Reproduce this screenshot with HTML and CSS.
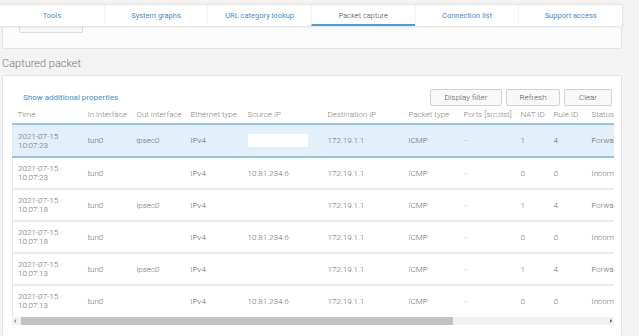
FILE: index.html
```html
<!DOCTYPE html><html lang="en"><head><meta charset="utf-8">
<meta name="viewport" content="width=device-width,initial-scale=1">
<title>Diagnostics · Packet capture</title>
<link rel="stylesheet" href="styles.css">
</head>
<body>
<div class="page">
  <nav class="tabs">
    <a class="tab">Tools</a>
    <a class="tab">System graphs</a>
    <a class="tab">URL category lookup</a>
    <a class="tab active">Packet capture</a>
    <a class="tab">Connection list</a>
    <a class="tab">Support access</a>
  </nav>

  <div class="card top-card"><div class="btn-stub"></div></div>

  <h2 class="section-title">Captured packet</h2>

  <div class="card capture">
    <div class="toolbar">
      <a class="link">Show additional properties</a>
      <div class="actions">
        <button class="btn btn-filter">Display filter</button>
        <button class="btn btn-refresh">Refresh</button>
        <button class="btn btn-clear">Clear</button>
      </div>
    </div>

    <div class="grid-wrap">
      <table class="packets">
        <colgroup>
          <col class="c-time"><col class="c-in"><col class="c-out"><col class="c-eth">
          <col class="c-src"><col class="c-dst"><col class="c-pkt"><col class="c-ports">
          <col class="c-nat"><col class="c-rule"><col class="c-status">
        </colgroup>
        <thead>
          <tr><th>Time</th><th>In interface</th><th>Out interface</th><th>Ethernet type</th><th>Source IP</th><th>Destination IP</th><th>Packet type</th><th>Ports [src,dst]</th><th>NAT ID</th><th>Rule ID</th><th>Status</th></tr>
        </thead>
        <tbody>
          <tr class="selected"><td>2021-07-15<br>10:07:23</td><td>tun0</td><td>ipsec0</td><td>IPv4</td><td><span class="redacted"></span></td><td>172.19.1.1</td><td>ICMP</td><td class="dim">--</td><td>1</td><td>4</td><td>Forwarded</td></tr>
          <tr><td>2021-07-15<br>10:07:23</td><td>tun0</td><td></td><td>IPv4</td><td>10.81.234.6</td><td>172.19.1.1</td><td>ICMP</td><td class="dim">--</td><td>0</td><td>0</td><td>Incoming</td></tr>
          <tr><td>2021-07-15<br>10:07:18</td><td>tun0</td><td>ipsec0</td><td>IPv4</td><td></td><td>172.19.1.1</td><td>ICMP</td><td class="dim">--</td><td>1</td><td>4</td><td>Forwarded</td></tr>
          <tr><td>2021-07-15<br>10:07:18</td><td>tun0</td><td></td><td>IPv4</td><td>10.81.234.6</td><td>172.19.1.1</td><td>ICMP</td><td class="dim">--</td><td>0</td><td>0</td><td>Incoming</td></tr>
          <tr><td>2021-07-15<br>10:07:13</td><td>tun0</td><td>ipsec0</td><td>IPv4</td><td></td><td>172.19.1.1</td><td>ICMP</td><td class="dim">--</td><td>1</td><td>4</td><td>Forwarded</td></tr>
          <tr><td>2021-07-15<br>10:07:13</td><td>tun0</td><td></td><td>IPv4</td><td>10.81.234.6</td><td>172.19.1.1</td><td>ICMP</td><td class="dim">--</td><td>0</td><td>0</td><td>Incoming</td></tr>
        </tbody>
      </table>
    </div>

    <div class="hscroll">
      <span class="arrow arrow-left"></span>
      <div class="track"><div class="thumb"></div></div>
      <span class="arrow arrow-right"></span>
    </div>
  </div>
</div>
</body></html>
```

FILE: styles.css
```css
:root{
  --page-bg:#f3f3f3;
  --card-border:#e3e3e3;
  --blue:#3a8fd3;
  --text:#666;
  --head:#808080;
  --sel-bg:#e3eff9;
  --sel-line:#94c4ea;
}
*{box-sizing:border-box}
html,body{margin:0;height:100%;overflow:hidden}
body{
  background:var(--page-bg);color:var(--text);
  font-family:Roboto,"Liberation Sans",Arial,sans-serif;font-size:8px;font-weight:300;
}
.page{width:623px;padding-top:4px}

/* ---------- tab bar ---------- */
.tabs{
  display:grid;grid-template-columns:repeat(6,1fr);height:23px;
  background:#fff;border:1px solid #e6e6e6;border-left:none;
  box-shadow:0 1px 3px rgba(0,0,0,.06);position:relative;z-index:1;
}
.tab{
  display:flex;align-items:center;justify-content:center;
  font-size:7.5px;font-weight:400;color:var(--blue);
  border-left:1px solid #f0f0f0;border-bottom:2px solid transparent;padding-top:2px;
}
.tab:first-child{border-left:none}
.tab.active{color:#444;font-weight:300;border-bottom-color:#4a9edb}

/* ---------- cards ---------- */
.card{
  margin:0 1px 0 2px;background:#fff;border:1px solid var(--card-border);border-radius:2px;
}
.top-card{height:22px;border-top:none;padding-left:16px;background:#fcfcfc}
.btn-stub{width:64px;height:6px;border:1px solid #dcdcdc;border-top:none;border-radius:0 0 2px 2px;background:#f8f8f8}

.section-title{
  margin:0;height:26px;padding:8px 0 0 2px;
  font-size:11px;font-weight:300;color:#777;line-height:13px;
}

.capture{height:262px;padding:13px 9px 0 9px}

.toolbar{display:flex;align-items:center;justify-content:space-between;height:17px}
.link{margin-left:11px;color:var(--blue);font-size:8px;font-weight:400}
.actions{display:flex;gap:4px}
.btn{
  height:17px;padding:0;border:1px solid #d2d2d2;border-radius:2px;background:#f8f8f8;
  font-family:inherit;font-size:8px;font-weight:300;color:#555;
}
.btn-filter{width:72px}
.btn-refresh{width:54px}
.btn-clear{width:48px}

/* ---------- packet table ---------- */
.grid-wrap{width:602px;overflow:hidden;height:210px}
.packets{width:654px;table-layout:fixed;border-collapse:collapse}
.c-time{width:70px}.c-in{width:49px}.c-out{width:54px}.c-eth{width:57px}
.c-src{width:80px}.c-dst{width:81px}.c-pkt{width:55px}.c-ports{width:57px}
.c-nat{width:33px}.c-rule{width:38px}.c-status{width:80px}
.packets th{
  height:18px;padding:0 0 0 5px;text-align:left;font-weight:300;color:var(--head);
  white-space:nowrap;
}
.packets td{
  height:32px;padding:0 0 0 5px;line-height:9px;color:var(--text);white-space:nowrap;overflow:hidden;
}
.packets tbody tr{background:#fff;border-bottom:2px solid #ececec;border-left:1px solid #e6e6e6}
.packets tbody tr.selected{background:var(--sel-bg);border-top:2px solid var(--sel-line);border-bottom:2px solid var(--sel-line)}
.packets tr.selected td{height:33px}
.packets td.dim{color:#aaa}
.redacted{display:inline-block;width:60px;height:13px;background:#fff;vertical-align:middle}

/* ---------- horizontal scrollbar ---------- */
.hscroll{display:flex;align-items:center;width:602px;height:8px;margin-top:1px;background:#f1f1f1}
.arrow{width:9px;height:8px;position:relative}
.arrow::after{content:"";position:absolute;top:2px;border:2px solid transparent}
.arrow-left::after{left:2px;border-right:2px solid #999;border-left:none}
.arrow-right::after{left:5px;border-left:2px solid #555;border-right:none}
.track{flex:1}
.thumb{width:432px;height:8px;background:#c2c2c2}
```
